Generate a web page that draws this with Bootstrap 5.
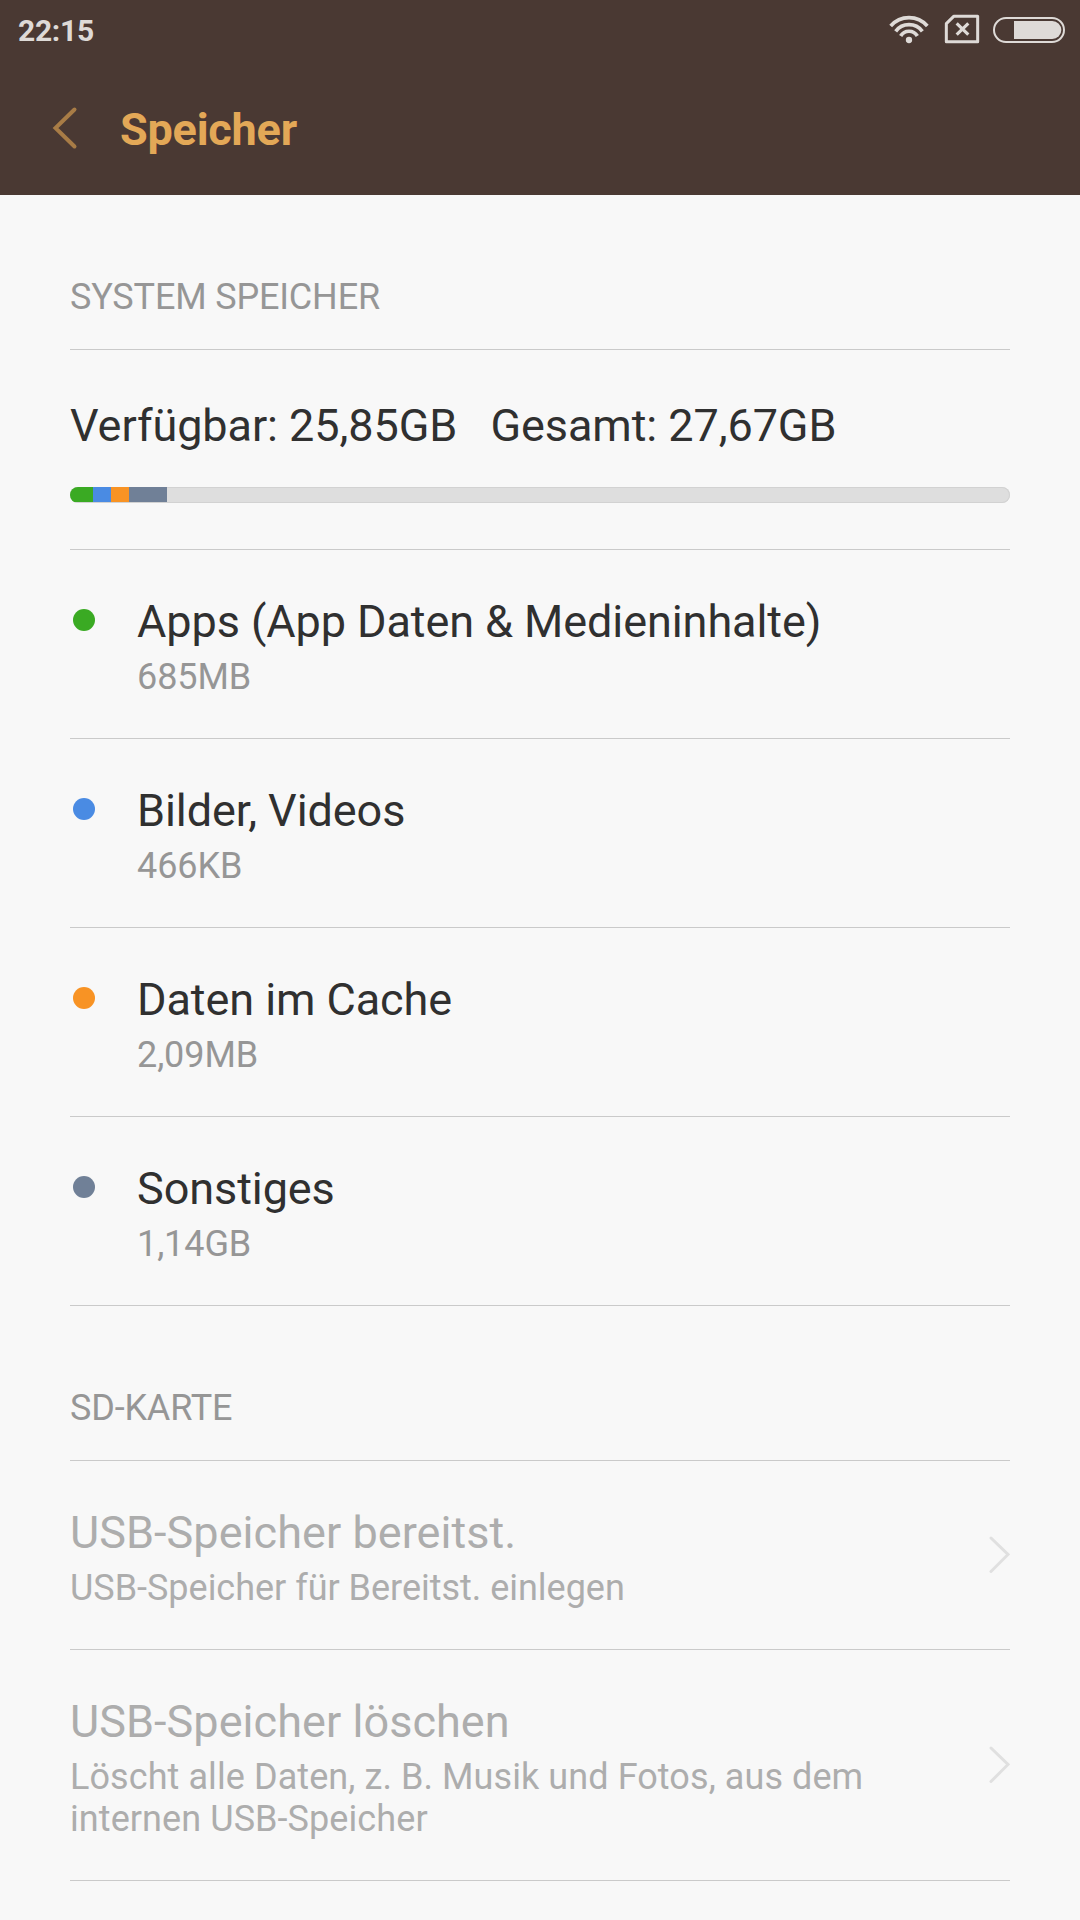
<!DOCTYPE html>
<html lang="de">
<head>
<meta charset="utf-8">
<meta name="viewport" content="width=device-width, initial-scale=1">
<title>Speicher</title>
<link href="https://cdn.jsdelivr.net/npm/bootstrap@5.3.0/dist/css/bootstrap.min.css" rel="stylesheet">
<style>
body{font-family:Roboto,sans-serif;background:#f8f8f8;color:#303030;width:1080px;height:1920px;overflow:hidden}
.topbar{background:#4a3933;height:195px;color:#e3a857}
.statusbar{height:60px;padding:0 14px 0 18px;color:#dedad7}
.clock{font-size:30px;font-weight:700;line-height:60px;letter-spacing:-.3px;margin-top:1px}
.status-icons{padding-top:14px}
.sim-icon{margin:0 12px 0 15px}
.titlebar{height:135px;padding:0 50px}
.back-icon{margin-top:46px;color:#a87c46}
.titlebar h1{font-size:45px;font-weight:700;line-height:60px;letter-spacing:-.22px;margin:40px 0 0 42px}
.pagebody{padding:0 70px}
.sect,.usage,.entry{border-bottom:1px solid #cacaca}
.sect{height:155px;font-size:36px;font-weight:400;line-height:42px;letter-spacing:-.17px;color:#969696;padding-top:81px;margin:0}
.usage{height:200px;padding-top:49px}
.usage-text,.entry-title{font-size:45px;line-height:54px;letter-spacing:-.08px}
.usage-text{white-space:pre}
.meter{height:16px;border-radius:8px;background:#dedede;box-shadow:inset 0 0 0 1px #d2d2d2;margin-top:34px;overflow:hidden}
.meter-part{height:15px}
.entry{min-height:189px}
.entry-text{padding:45px 0 40px}
.entry-sub{font-size:36px;line-height:42px;letter-spacing:-.1px;color:#969696;margin-top:7px}
.dot{width:22px;height:22px;margin:59px 42px 0 3px}
.c-apps{background:#3aaa23}
.c-media{background:#4a8be3}
.c-cache{background:#f89324}
.c-other{background:#708097}
.off,.off .entry-sub{color:#adadad}
.off .entry-title{letter-spacing:.05px}
.off .entry-sub{letter-spacing:-.02px}
.off .entry-sub.wordy{letter-spacing:.08px}
.off .entry-text{max-width:830px}
.go{color:#e0e0e0}
</style>
</head>
<body>
<header class="topbar">
  <div class="statusbar d-flex justify-content-between align-items-start">
    <span class="clock">22:15</span>
    <div class="status-icons d-flex">
      <svg width="40" height="30" viewBox="87 42 120 90" fill="none" stroke="currentColor" stroke-width="11"><path d="M92 78A72.8 72.8 0 0 1 202 78M107 94A50 50 0 0 1 187 94M122 108A29 29 0 0 1 172 108"/><circle cx="147" cy="120" r="9.5" fill="currentColor" stroke="none"/></svg>
      <svg class="sim-icon" width="36" height="30" viewBox="252 42 108 90" fill="none" stroke="currentColor"><path d="M281 49H353V125H259V71Z" stroke-width="9" stroke-linejoin="round"/><path d="M290 70L325 104M325 70L290 104" stroke-width="9.5"/></svg>
      <svg width="74" height="30" viewBox="396 42 222 90" fill="none"><rect x="402" y="54" width="210" height="72" rx="36" stroke="currentColor" stroke-width="6"/><path d="M462 63H577A27 27 0 0 1 577 117H462Z" fill="currentColor"/></svg>
    </div>
  </div>
  <div class="titlebar d-flex align-items-start">
    <svg class="back-icon" width="28" height="44"><path d="M24.5 3.5L5.5 22L24.5 40.5" fill="none" stroke="currentColor" stroke-width="4" stroke-linecap="round"/></svg>
    <h1>Speicher</h1>
  </div>
</header>
<main class="pagebody">
  <h2 class="sect">SYSTEM SPEICHER</h2>
  <div class="usage">
    <div class="usage-text">Verfügbar: 25,85GB   Gesamt: 27,67GB</div>
    <div class="meter d-flex">
      <div class="meter-part c-apps" style="width:23px"></div>
      <div class="meter-part c-media" style="width:18px"></div>
      <div class="meter-part c-cache" style="width:18px"></div>
      <div class="meter-part c-other" style="width:38px"></div>
    </div>
  </div>
  <div class="entry d-flex"><span class="dot rounded-circle c-apps"></span><div class="entry-text"><div class="entry-title">Apps (App Daten &amp; Medieninhalte)</div><div class="entry-sub">685MB</div></div></div>
  <div class="entry d-flex"><span class="dot rounded-circle c-media"></span><div class="entry-text"><div class="entry-title">Bilder, Videos</div><div class="entry-sub">466KB</div></div></div>
  <div class="entry d-flex"><span class="dot rounded-circle c-cache"></span><div class="entry-text"><div class="entry-title">Daten im Cache</div><div class="entry-sub">2,09MB</div></div></div>
  <div class="entry d-flex"><span class="dot rounded-circle c-other"></span><div class="entry-text"><div class="entry-title">Sonstiges</div><div class="entry-sub">1,14GB</div></div></div>
  <h2 class="sect">SD-KARTE</h2>
  <div class="entry off d-flex justify-content-between align-items-center">
    <div class="entry-text"><div class="entry-title">USB-Speicher bereitst.</div><div class="entry-sub">USB-Speicher für Bereitst. einlegen</div></div>
    <svg class="go flex-shrink-0" width="21" height="38"><path d="M2 2L19 18.5L2 35.5" fill="none" stroke="currentColor" stroke-width="3" stroke-linecap="round"/></svg>
  </div>
  <div class="entry off d-flex justify-content-between align-items-center">
    <div class="entry-text"><div class="entry-title">USB-Speicher löschen</div><div class="entry-sub wordy">Löscht alle Daten, z. B. Musik und Fotos, aus dem internen USB-Speicher</div></div>
    <svg class="go flex-shrink-0" width="21" height="38"><path d="M2 2L19 18.5L2 35.5" fill="none" stroke="currentColor" stroke-width="3" stroke-linecap="round"/></svg>
  </div>
</main>
<script src="https://cdn.jsdelivr.net/npm/bootstrap@5.3.0/dist/js/bootstrap.bundle.min.js"></script>
</body>
</html>
